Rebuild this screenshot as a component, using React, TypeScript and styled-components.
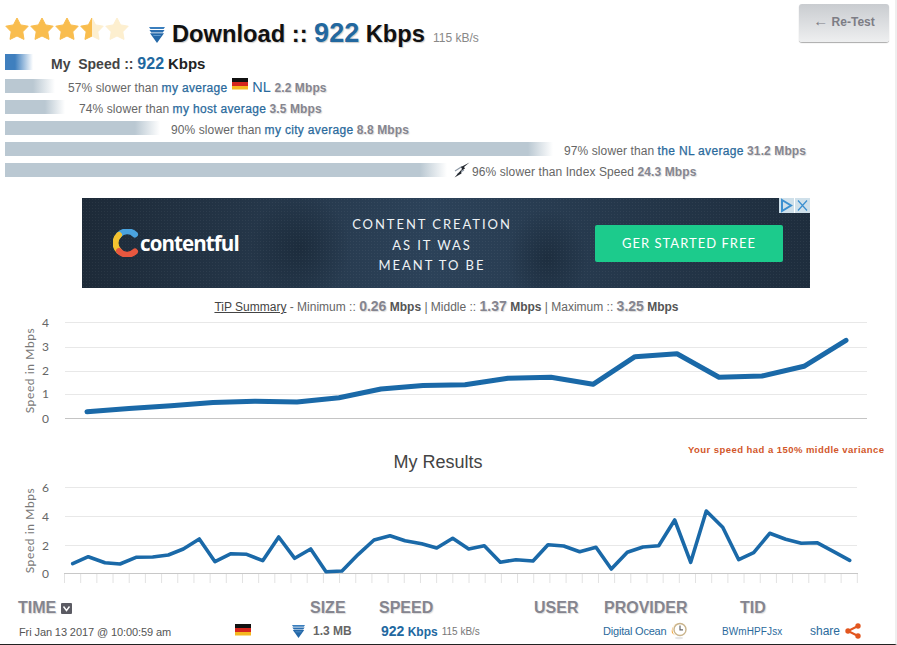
import styled, { createGlobalStyle } from "styled-components";

const GlobalStyle = createGlobalStyle`
  html, body {
    margin: 0;
    padding: 0;
    background: #fff;
  }
  body {
    font-family: "Liberation Sans", Arial, sans-serif;
    color: #555;
  }
`;

const firstChart = [
  [87, 411.7], [129, 408.5], [171, 405.7], [213, 402.5], [255, 401.3], [297, 402],
  [339, 397.7], [381, 389], [423, 385.5], [465, 384.7], [508, 378.3], [551, 377.3],
  [593, 384.3], [635, 356.7], [677, 353.7], [719, 377.3], [762, 376], [804, 366.3],
  [846, 340.3],
];

const secondChart = [
  [72.7, 563.7], [88.3, 556.7], [105, 562.7], [120, 564], [136, 557.3], [152.7, 557],
  [168.3, 555], [183.3, 549], [199.3, 539], [215, 561.7], [231, 553.7], [246.7, 554.3],
  [262.7, 560.7], [278.7, 537], [294.7, 558.3], [310.7, 549], [326, 571.7], [342, 571],
  [358.3, 554.3], [374, 540], [390, 535.7], [405, 540.7], [421.7, 543.7], [436.7, 548],
  [452.7, 538.3], [468.7, 549], [484.3, 545.7], [500.3, 562.3], [516, 559.7], [533, 561],
  [548, 544.7], [563.7, 546], [579.7, 551.7], [596, 547.3], [611.3, 569], [627.3, 552.3],
  [643, 547], [658.7, 545.7], [674.7, 520], [690.7, 562.3], [706.3, 511], [722.7, 527.3],
  [738.7, 559.7], [753.7, 552.7], [769.7, 533.3], [785.7, 539.3], [801.3, 543.3],
  [817, 542.7], [833.7, 551.7], [849.7, 560.3],
];

const toPoints = (list: number[][]) => list.map((p) => p.join(",")).join(" ");

const STAR =
  "M12 1 L15.6 7.9 L23.2 9.2 L17.8 14.8 L19 22.4 L12 19 L5 22.4 L6.2 14.8 L0.8 9.2 L8.4 7.9 Z";

const Stars = () => (
  <StarIcon viewBox="0 0 125 25" width="125" height="25">
    <defs>
      <clipPath id="half">
        <rect x="75" y="0" width="12" height="25" />
      </clipPath>
    </defs>
    {[0, 25, 50, 75, 100].map((x, i) => (
      <path
        key={x}
        d={STAR}
        transform={`translate(${x} 0)`}
        fill={i < 3 ? "#f9bd4e" : "#fdefcf"}
        stroke={i < 3 ? "#f9bd4e" : "#fdefcf"}
        strokeLinejoin="round"
      />
    ))}
    <g clipPath="url(#half)">
      <path
        d={STAR}
        transform="translate(75 0)"
        fill="#f9bd4e"
        stroke="#f9bd4e"
        strokeLinejoin="round"
      />
    </g>
  </StarIcon>
);

const DownArrow = ({ size }: { size: number }) => (
  <svg viewBox="0 0 16 16" width={size} height={size}>
    <path d="M0 0 H16 L14.6 2 H1.4 Z" fill="#3a7ebd" />
    <path d="M0.5 3 H15.5 L13.8 5.4 H2.2 Z" fill="#2a6eb0" />
    <path d="M1 6.2 H15 L8 16 Z" fill="#2468a8" />
    <path d="M4 8 H12 L11.4 9 H4.6 Z" fill="#5f9ad0" />
  </svg>
);

const Flag = () => (
  <svg viewBox="0 0 16 12" width="16" height="12">
    <rect width="16" height="4" fill="#111" />
    <rect y="4" width="16" height="4" fill="#d5261e" />
    <rect y="8" width="16" height="3.5" fill="#f5b81f" />
  </svg>
);

const Flash = () => (
  <svg viewBox="0 0 16 16" width="16" height="16">
    <path d="M1 9 L8 4.5 M3 12.5 L10 8" stroke="#8d98a5" strokeWidth="1.2" />
    <path d="M15.5 0.5 L7 5 L8 7 L0.5 15.5 L7.5 11.5 L7 9 L11 6.5 L10 5 Z" fill="#23272e" />
  </svg>
);

const ClockIcon = () => (
  <svg viewBox="0 0 16 18" width="16" height="18">
    <path d="M6 1.5 A7 7 0 0 0 4 13.5 L1 11 Q-0.5 5 6 1.5 Z" fill="#f0a030" />
    <circle cx="9" cy="7.5" r="6" fill="#fff" stroke="#c9b48c" strokeWidth="1.4" />
    <path d="M9 3.6 V7.8 H12" fill="none" stroke="#666" strokeWidth="1.2" />
    <ellipse cx="8" cy="16" rx="4" ry="1.2" fill="#e6e6e6" />
  </svg>
);

const ShareIcon = () => (
  <svg viewBox="0 0 16 16" width="16" height="16">
    <path d="M13 3 L3 8 L13 13" fill="none" stroke="#e2561f" strokeWidth="2" />
    <circle cx="13" cy="3" r="2.7" fill="#e2561f" />
    <circle cx="3" cy="8" r="2.7" fill="#e2561f" />
    <circle cx="13" cy="13" r="2.7" fill="#e2561f" />
  </svg>
);

const SortBox = () => (
  <svg viewBox="0 0 11 11" width="11" height="11">
    <rect width="11" height="11" rx="1" fill="#5b5b63" />
    <path d="M2.5 3.5 L5.5 7.5 L8.5 3.5" fill="none" stroke="#fff" strokeWidth="1.4" />
  </svg>
);

const ContentfulMark = () => (
  <svg viewBox="0 0 26 28" width="26" height="28">
    <path d="M22 5.5 A11 11 0 0 0 6 6" fill="none" stroke="#4aa3df" strokeWidth="6" strokeLinecap="round" />
    <path d="M6 6 A11 11 0 0 0 6 22" fill="none" stroke="#f2c230" strokeWidth="6" strokeLinecap="round" />
    <path d="M6 22 A11 11 0 0 0 22 22.5" fill="none" stroke="#e8573f" strokeWidth="6" strokeLinecap="round" />
  </svg>
);

const App = () => {
  return (
    <Page>
      <GlobalStyle />
      <Header>
        <Stars />
        <ArrowSlot>
          <DownArrow size={16} />
        </ArrowSlot>
        <Title>
          Download :: <TitleValue>922</TitleValue> Kbps
        </Title>
        <TitleSmall>115 kB/s</TitleSmall>
        <RetestButton>
          <RetestArrow>←</RetestArrow> Re-Test
        </RetestButton>
      </Header>

      <Bars>
        <SpeedRow>
          <Bar $width={46} $solid={10} $fade={28} $color="#3f7fbe" $tall />
          <MySpeed>
            My&nbsp; Speed :: <Blue>922</Blue> <Dark>Kbps</Dark>
          </MySpeed>
        </SpeedRow>
        <Row>
          <Bar $width={63} $solid={28} $fade={50} />
          <Compare>
            57% slower than <Link>my average</Link>
            <FlagSlot>
              <Flag />
            </FlagSlot>
            <CountryCode>NL</CountryCode> <Value>2.2 Mbps</Value>
          </Compare>
        </Row>
        <Row>
          <Bar $width={74} $solid={40} $fade={60} />
          <Compare>
            74% slower than <Link>my host average</Link> <Value>3.5 Mbps</Value>
          </Compare>
        </Row>
        <Row>
          <Bar $width={166} $solid={130} $fade={155} />
          <Compare>
            90% slower than <Link>my city average</Link> <Value>8.8 Mbps</Value>
          </Compare>
        </Row>
        <Row>
          <Bar $width={559} $solid={523} $fade={548} />
          <Compare>
            97% slower than <Link>the NL average</Link> <Value>31.2 Mbps</Value>
          </Compare>
        </Row>
        <Row>
          <Bar $width={449} $solid={415} $fade={442} />
          <FlashSlot>
            <Flash />
          </FlashSlot>
          <Compare>
            96% slower than Index Speed <Value>24.3 Mbps</Value>
          </Compare>
        </Row>
      </Bars>

      <Ad>
        <AdChoices>
          <svg viewBox="0 0 15 15" width="15" height="15">
            <path d="M3 2 L12 7.5 L3 13 Z" fill="none" stroke="#3a8fd0" strokeWidth="2" />
          </svg>
          <svg viewBox="0 0 15 15" width="15" height="15">
            <path d="M3 2.5 L12 12.5 M12 2.5 L3 12.5" stroke="#3a8fd0" strokeWidth="1.2" />
          </svg>
        </AdChoices>
        <AdLogo>
          <ContentfulMark />
          <AdLogoText>contentful</AdLogoText>
        </AdLogo>
        <AdCopy>
          <span>CONTENT CREATION</span>
          <span>AS IT WAS</span>
          <span>MEANT TO BE</span>
        </AdCopy>
        <AdButton>GER STARTED FREE</AdButton>
      </Ad>

      <Summary>
        <SummaryLink>TiP Summary</SummaryLink> - Minimum :: <SummaryValue>0.26</SummaryValue>{" "}
        <SummaryUnit>Mbps</SummaryUnit> | Middle :: <SummaryValue>1.37</SummaryValue>{" "}
        <SummaryUnit>Mbps</SummaryUnit> | Maximum :: <SummaryValue>3.25</SummaryValue>{" "}
        <SummaryUnit>Mbps</SummaryUnit>
      </Summary>

      <ChartSvg viewBox="0 316 897 110" width="897" height="110">
        {[322.5, 347.5, 371.5, 394.5].map((y) => (
          <line key={y} x1="65" x2="867" y1={y} y2={y} stroke="#e8e8e8" />
        ))}
        <line x1="65" x2="867" y1="418.5" y2="418.5" stroke="#c4c4c4" />
        {[
          ["4", 327],
          ["3", 351],
          ["2", 375],
          ["1", 398],
          ["0", 422.5],
        ].map(([label, y]) => (
          <AxisLabel key={label} x="49" y={y} textAnchor="end">
            {label}
          </AxisLabel>
        ))}
        <AxisTitle transform="translate(34 370.5) rotate(-90)" textAnchor="middle">
          Speed in Mbps
        </AxisTitle>
        <polyline
          points={toPoints(firstChart)}
          fill="none"
          stroke="#1a69a8"
          strokeWidth="5"
          strokeLinecap="round"
          strokeLinejoin="round"
        />
      </ChartSvg>

      <ResultsHead>
        <ResultsTitle>My Results</ResultsTitle>
        <Variance>Your speed had a 150% middle variance</Variance>
      </ResultsHead>

      <ChartSvg viewBox="0 480 897 110" width="897" height="110">
        {[487.5, 516.5, 545.5].map((y) => (
          <line key={y} x1="65" x2="857" y1={y} y2={y} stroke="#e8e8e8" />
        ))}
        <line x1="64" x2="858" y1="573.5" y2="573.5" stroke="#c8c8c8" />
        {Array.from({ length: 50 }, (_, i) => 64.5 + i * 16.18).map((x) => (
          <line key={x} x1={x} x2={x} y1="574" y2="583" stroke="#e2e2e2" />
        ))}
        {[
          ["6", 492],
          ["4", 521],
          ["2", 550],
          ["0", 577.5],
        ].map(([label, y]) => (
          <AxisLabel key={label} x="49" y={y} textAnchor="end">
            {label}
          </AxisLabel>
        ))}
        <AxisTitle transform="translate(34 530.5) rotate(-90)" textAnchor="middle">
          Speed in Mbps
        </AxisTitle>
        <polyline
          points={toPoints(secondChart)}
          fill="none"
          stroke="#1a69a8"
          strokeWidth="3.6"
          strokeLinecap="round"
          strokeLinejoin="round"
        />
      </ChartSvg>

      <TableHead>
        <HeadCell>
          TIME
          <SortBox />
        </HeadCell>
        <HeadCell>SIZE</HeadCell>
        <HeadCell>SPEED</HeadCell>
        <HeadCell>USER</HeadCell>
        <HeadCell>PROVIDER</HeadCell>
        <HeadCell>TID</HeadCell>
      </TableHead>
      <TableRow>
        <DateCell>Fri Jan 13 2017 @ 10:00:59 am</DateCell>
        <FlagCell>
          <Flag />
        </FlagCell>
        <SizeCell>
          <DownArrow size={13} />
          1.3 MB
        </SizeCell>
        <SpeedCell>
          <RowSpeed>
            <RowSpeedValue>922</RowSpeedValue> Kbps
          </RowSpeed>
          <RowRate>115 kB/s</RowRate>
        </SpeedCell>
        <ProviderCell>
          Digital Ocean
          <ClockIcon />
        </ProviderCell>
        <TidCell>BWmHPFJsx</TidCell>
        <ShareCell>
          share
          <ShareIcon />
        </ShareCell>
      </TableRow>
    </Page>
  );
};

export default App;

const Page = styled.div`
  width: 895px;
  height: 644px;
  overflow: hidden;
  background: #fff;
  border-right: 2px solid #efefef;
  border-bottom: 1px solid #222;
`;

const Header = styled.div`
  display: flex;
  align-items: flex-start;
  height: 54px;
  padding-left: 5px;
`;

const StarIcon = styled.svg`
  margin-top: 17px;
  flex: none;
`;

const ArrowSlot = styled.div`
  margin: 27px 0 0 19px;
  display: flex;
`;

const Title = styled.div`
  margin: 17px 0 0 7px;
  font-size: 23.7px;
  line-height: 32px;
  font-weight: 700;
  color: #111;
  white-space: nowrap;
  text-shadow: 1px 1px 1px #ccc;
`;

const TitleValue = styled.span`
  font-size: 27px;
  color: #22689f;
`;

const TitleSmall = styled.div`
  margin: 31px 0 0 8px;
  font-size: 12px;
  line-height: 14px;
  color: #888;
  white-space: nowrap;
`;

const RetestButton = styled.div`
  margin: 4px 0 0 auto;
  margin-right: 6px;
  width: 90px;
  height: 38px;
  box-sizing: border-box;
  padding-top: 10px;
  text-align: center;
  font-size: 12px;
  line-height: 14px;
  font-weight: 700;
  color: #7d7d85;
  border-radius: 3px;
  background: linear-gradient(#c9ccd0, #eeeff0);
  box-shadow: 0 1px 1px #aaa;
`;

const RetestArrow = styled.span`
  font-size: 15px;
  font-weight: 400;
  line-height: 14px;
`;

const Bars = styled.div`
  display: flex;
  flex-direction: column;
  gap: 7px;
  padding-left: 5px;
`;

const Row = styled.div`
  display: flex;
  align-items: center;
  height: 14px;
  white-space: nowrap;
`;

const SpeedRow = styled(Row)`
  height: 16px;
  margin-bottom: 2px;
`;

const Bar = styled.div<{
  $width: number;
  $solid: number;
  $fade: number;
  $color?: string;
  $tall?: boolean;
}>`
  flex: none;
  width: ${({ $width }) => $width}px;
  height: ${({ $tall }) => ($tall ? 16 : 14)}px;
  background: linear-gradient(
    90deg,
    ${({ $color }) => $color || "#bac8d2"} ${({ $solid }) => $solid}px,
    #fff ${({ $fade }) => $fade}px
  );
`;

const MySpeed = styled.div`
  padding-top: 4px;
  font-size: 14px;
  font-weight: 700;
  color: #444;
`;

const Blue = styled.span`
  font-size: 16px;
  color: #22689f;
`;

const Dark = styled.span`
  font-size: 15px;
  color: #222;
`;

const Compare = styled.div`
  display: flex;
  align-items: center;
  gap: 3.4px;
  padding-top: 4px;
  font-size: 12px;
  color: #666;
  letter-spacing: 0.1px;
`;

const Link = styled.span`
  color: #2a6a9c;
  font-weight: 400;
  letter-spacing: 0.32px;
  -webkit-text-stroke: 0.25px #2a6a9c;
`;

const Value = styled.span`
  font-weight: 700;
  color: #85858f;
  text-shadow: 1px 1px 1px #ddd;
`;

const FlagSlot = styled.span`
  display: flex;
  margin: -9px 1px 0 1px;
`;

const CountryCode = styled.span`
  font-size: 14.5px;
  color: #2a6a9c;
  margin-top: -2px;
`;

const FlashSlot = styled.span`
  display: flex;
  margin-right: 2px;
`;

const Ad = styled.div`
  position: relative;
  display: flex;
  align-items: center;
  width: 728px;
  height: 90px;
  margin: 21px 0 0 82px;
  color: #fff;
  background:
    radial-gradient(rgba(255, 255, 255, 0.05) 0.7px, transparent 0.8px) 0 0 / 3px 3px,
    radial-gradient(ellipse 50px 55px at 218px 50px, rgba(10, 20, 30, 0.35), transparent),
    radial-gradient(ellipse 40px 50px at 465px 60px, rgba(10, 20, 30, 0.35), transparent),
    linear-gradient(90deg, #1d2a38, #2c4259 48%, #1e2d3d);
`;

const AdChoices = styled.div`
  position: absolute;
  top: 0;
  right: 0;
  display: flex;
  gap: 1px;
  background: #fff;
  svg {
    background: #cfe0ea;
  }
`;

const AdLogo = styled.div`
  display: flex;
  align-items: center;
  gap: 1px;
  width: 190px;
  margin-left: 31px;
  flex: none;
`;

const AdLogoText = styled.span`
  font-family: "Open Sans", sans-serif;
  font-size: 20.5px;
  font-weight: 700;
  letter-spacing: -0.9px;
`;

const AdCopy = styled.div`
  display: flex;
  flex-direction: column;
  align-items: center;
  width: 238px;
  margin-left: 10px;
  margin-top: 4px;
  flex: none;
  font-family: Lato, sans-serif;
  font-size: 13px;
  line-height: 20.5px;
  letter-spacing: 1.95px;
  color: #eef2f5;
`;

const AdButton = styled.div`
  width: 188px;
  height: 37px;
  margin-left: 44px;
  flex: none;
  border-radius: 2px;
  background: #1ccb8c;
  text-align: center;
  font-family: Lato, sans-serif;
  font-size: 13px;
  line-height: 36px;
  letter-spacing: 1px;
`;

const Summary = styled.div`
  margin-top: 10px;
  height: 18px;
  padding-right: 2px;
  text-align: center;
  font-size: 12px;
  line-height: 16px;
  color: #666;
  white-space: nowrap;
`;

const SummaryLink = styled.span`
  color: #444;
  text-decoration: underline;
`;

const SummaryValue = styled.b`
  font-size: 14px;
  color: #85858f;
  text-shadow: 1px 1px 1px #ddd;
`;

const SummaryUnit = styled.b`
  color: #555;
`;

const ChartSvg = styled.svg`
  display: block;
`;

const AxisLabel = styled.text`
  font-family: Lato, sans-serif;
  font-size: 12px;
  fill: #666;
`;

const AxisTitle = styled.text`
  font-family: Lato, sans-serif;
  font-size: 12px;
  letter-spacing: 0.6px;
  fill: #777;
`;

const ResultsHead = styled.div`
  display: grid;
  grid-template-columns: 353px 170px 1fr;
  height: 54px;
`;

const ResultsTitle = styled.div`
  grid-column: 2;
  margin-top: 26px;
  text-align: center;
  font-size: 18px;
  line-height: 20px;
  color: #444;
`;

const Variance = styled.div`
  margin-top: 18px;
  padding-left: 165px;
  font-size: 9.5px;
  line-height: 12px;
  font-weight: 700;
  letter-spacing: 0.45px;
  color: #d2572a;
  white-space: nowrap;
`;

const TableHead = styled.div`
  display: grid;
  grid-template-columns: 292px 69px 155px 70px 136px 1fr;
  align-items: center;
  height: 22px;
  margin-top: 7px;
  padding-left: 18px;
`;

const HeadCell = styled.div`
  display: flex;
  align-items: center;
  gap: 5px;
  font-size: 16px;
  font-weight: 700;
  color: #85858f;
  text-shadow: 1px 1px 1px #ddd;
`;

const TableRow = styled.div`
  display: grid;
  grid-template-columns: 216px 57px 89px 222px 119px 88px 1fr;
  align-items: center;
  height: 22px;
  margin-top: 1px;
  padding-left: 19px;
  white-space: nowrap;
`;

const DateCell = styled.div`
  padding-top: 1px;
  font-size: 11px;
  letter-spacing: -0.1px;
  color: #555;
`;

const FlagCell = styled.div`
  display: flex;
  margin-top: -2px;
`;

const SizeCell = styled.div`
  display: flex;
  align-items: center;
  gap: 8px;
  font-size: 12px;
  font-weight: 700;
  color: #666;
`;

const SpeedCell = styled.div`
  display: flex;
  align-items: center;
  gap: 4px;
`;

const RowSpeed = styled.span`
  font-size: 12px;
  font-weight: 700;
  color: #22689f;
`;

const RowSpeedValue = styled.span`
  font-size: 14px;
`;

const RowRate = styled.span`
  font-size: 10px;
  color: #777;
`;

const ProviderCell = styled.div`
  display: flex;
  align-items: center;
  gap: 5px;
  font-size: 11px;
  letter-spacing: -0.2px;
  color: #2a6a9c;
`;

const TidCell = styled.div`
  font-size: 10px;
  letter-spacing: 0.1px;
  color: #2a6a9c;
`;

const ShareCell = styled.div`
  display: flex;
  align-items: center;
  gap: 5px;
  font-size: 12px;
  color: #2a6a9c;
`;
